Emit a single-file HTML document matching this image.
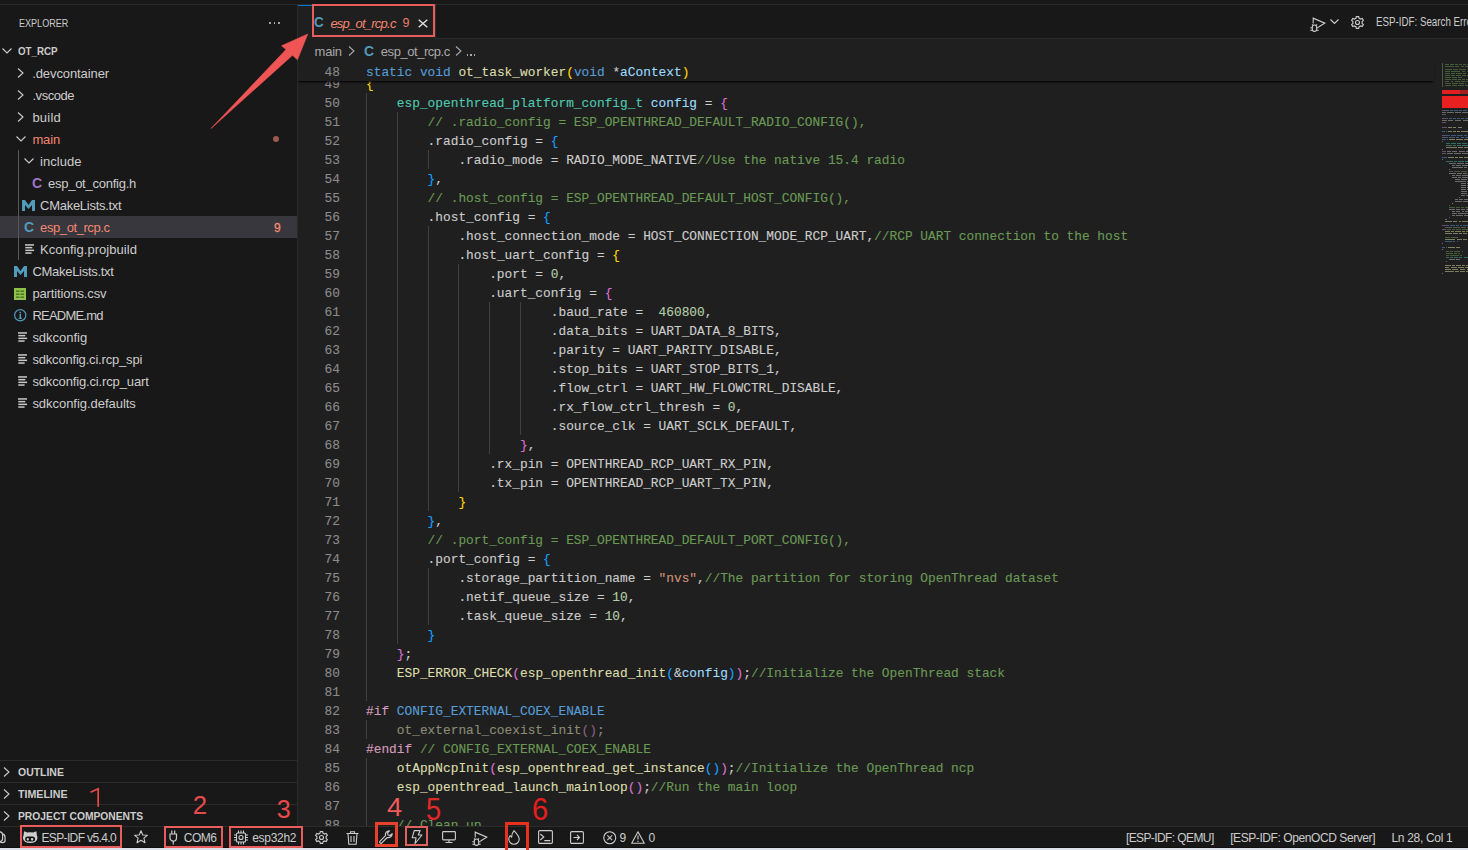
<!DOCTYPE html><html><head><meta charset="utf-8"><style>
*{margin:0;padding:0;box-sizing:border-box}
html,body{width:1468px;height:850px;overflow:hidden;background:#181818}
body{position:relative;font-family:"Liberation Sans",sans-serif;color:#cccccc}
.a{position:absolute}
.t{white-space:pre}
.mono{font-family:"Liberation Mono",monospace;font-size:12.84px;white-space:pre;line-height:19px;-webkit-text-stroke:0.12px currentColor}
svg{overflow:visible}
</style></head><body>
<div class="a" style="left:0px;top:0px;width:1468px;height:4px;background:#181818;"></div>
<div class="a" style="left:0px;top:4px;width:1468px;height:1px;background:#2b2b2b;"></div>
<div class="a" style="left:0px;top:5px;width:297px;height:821px;background:#181818;"></div>
<div class="a" style="left:297px;top:5px;width:1px;height:821px;background:#2b2b2b;"></div>
<div class="a" style="left:298px;top:5px;width:1170px;height:821px;background:#1f1f1f;"></div>
<div class="a" style="left:298px;top:5px;width:1170px;height:34px;background:#181818;"></div>
<div class="a" style="left:298px;top:38px;width:1170px;height:1px;background:#2b2b2b;"></div>
<div class="a" style="left:298px;top:5px;width:138px;height:34px;background:#1f1f1f;border-top:1px solid #0078d4;border-right:1px solid #2b2b2b"></div>
<div class="a" style="left:366px;top:93px;width:1px;height:19px;background:#404040;"></div>
<div class="a" style="left:366px;top:112px;width:1px;height:19px;background:#404040;"></div>
<div class="a" style="left:397px;top:112px;width:1px;height:19px;background:#404040;"></div>
<div class="a" style="left:366px;top:131px;width:1px;height:19px;background:#404040;"></div>
<div class="a" style="left:397px;top:131px;width:1px;height:19px;background:#404040;"></div>
<div class="a" style="left:366px;top:150px;width:1px;height:19px;background:#404040;"></div>
<div class="a" style="left:397px;top:150px;width:1px;height:19px;background:#404040;"></div>
<div class="a" style="left:428px;top:150px;width:1px;height:19px;background:#404040;"></div>
<div class="a" style="left:366px;top:169px;width:1px;height:19px;background:#404040;"></div>
<div class="a" style="left:397px;top:169px;width:1px;height:19px;background:#404040;"></div>
<div class="a" style="left:366px;top:188px;width:1px;height:19px;background:#404040;"></div>
<div class="a" style="left:397px;top:188px;width:1px;height:19px;background:#404040;"></div>
<div class="a" style="left:366px;top:207px;width:1px;height:19px;background:#404040;"></div>
<div class="a" style="left:397px;top:207px;width:1px;height:19px;background:#404040;"></div>
<div class="a" style="left:366px;top:226px;width:1px;height:19px;background:#404040;"></div>
<div class="a" style="left:397px;top:226px;width:1px;height:19px;background:#404040;"></div>
<div class="a" style="left:428px;top:226px;width:1px;height:19px;background:#404040;"></div>
<div class="a" style="left:366px;top:245px;width:1px;height:19px;background:#404040;"></div>
<div class="a" style="left:397px;top:245px;width:1px;height:19px;background:#404040;"></div>
<div class="a" style="left:428px;top:245px;width:1px;height:19px;background:#404040;"></div>
<div class="a" style="left:366px;top:264px;width:1px;height:19px;background:#404040;"></div>
<div class="a" style="left:397px;top:264px;width:1px;height:19px;background:#404040;"></div>
<div class="a" style="left:428px;top:264px;width:1px;height:19px;background:#404040;"></div>
<div class="a" style="left:458px;top:264px;width:1px;height:19px;background:#404040;"></div>
<div class="a" style="left:366px;top:283px;width:1px;height:19px;background:#404040;"></div>
<div class="a" style="left:397px;top:283px;width:1px;height:19px;background:#404040;"></div>
<div class="a" style="left:428px;top:283px;width:1px;height:19px;background:#404040;"></div>
<div class="a" style="left:458px;top:283px;width:1px;height:19px;background:#404040;"></div>
<div class="a" style="left:366px;top:302px;width:1px;height:19px;background:#404040;"></div>
<div class="a" style="left:397px;top:302px;width:1px;height:19px;background:#404040;"></div>
<div class="a" style="left:428px;top:302px;width:1px;height:19px;background:#404040;"></div>
<div class="a" style="left:458px;top:302px;width:1px;height:19px;background:#404040;"></div>
<div class="a" style="left:489px;top:302px;width:1px;height:19px;background:#404040;"></div>
<div class="a" style="left:520px;top:302px;width:1px;height:19px;background:#404040;"></div>
<div class="a" style="left:366px;top:321px;width:1px;height:19px;background:#404040;"></div>
<div class="a" style="left:397px;top:321px;width:1px;height:19px;background:#404040;"></div>
<div class="a" style="left:428px;top:321px;width:1px;height:19px;background:#404040;"></div>
<div class="a" style="left:458px;top:321px;width:1px;height:19px;background:#404040;"></div>
<div class="a" style="left:489px;top:321px;width:1px;height:19px;background:#404040;"></div>
<div class="a" style="left:520px;top:321px;width:1px;height:19px;background:#404040;"></div>
<div class="a" style="left:366px;top:340px;width:1px;height:19px;background:#404040;"></div>
<div class="a" style="left:397px;top:340px;width:1px;height:19px;background:#404040;"></div>
<div class="a" style="left:428px;top:340px;width:1px;height:19px;background:#404040;"></div>
<div class="a" style="left:458px;top:340px;width:1px;height:19px;background:#404040;"></div>
<div class="a" style="left:489px;top:340px;width:1px;height:19px;background:#404040;"></div>
<div class="a" style="left:520px;top:340px;width:1px;height:19px;background:#404040;"></div>
<div class="a" style="left:366px;top:359px;width:1px;height:19px;background:#404040;"></div>
<div class="a" style="left:397px;top:359px;width:1px;height:19px;background:#404040;"></div>
<div class="a" style="left:428px;top:359px;width:1px;height:19px;background:#404040;"></div>
<div class="a" style="left:458px;top:359px;width:1px;height:19px;background:#404040;"></div>
<div class="a" style="left:489px;top:359px;width:1px;height:19px;background:#404040;"></div>
<div class="a" style="left:520px;top:359px;width:1px;height:19px;background:#404040;"></div>
<div class="a" style="left:366px;top:378px;width:1px;height:19px;background:#404040;"></div>
<div class="a" style="left:397px;top:378px;width:1px;height:19px;background:#404040;"></div>
<div class="a" style="left:428px;top:378px;width:1px;height:19px;background:#404040;"></div>
<div class="a" style="left:458px;top:378px;width:1px;height:19px;background:#404040;"></div>
<div class="a" style="left:489px;top:378px;width:1px;height:19px;background:#404040;"></div>
<div class="a" style="left:520px;top:378px;width:1px;height:19px;background:#404040;"></div>
<div class="a" style="left:366px;top:397px;width:1px;height:19px;background:#404040;"></div>
<div class="a" style="left:397px;top:397px;width:1px;height:19px;background:#404040;"></div>
<div class="a" style="left:428px;top:397px;width:1px;height:19px;background:#404040;"></div>
<div class="a" style="left:458px;top:397px;width:1px;height:19px;background:#404040;"></div>
<div class="a" style="left:489px;top:397px;width:1px;height:19px;background:#404040;"></div>
<div class="a" style="left:520px;top:397px;width:1px;height:19px;background:#404040;"></div>
<div class="a" style="left:366px;top:416px;width:1px;height:19px;background:#404040;"></div>
<div class="a" style="left:397px;top:416px;width:1px;height:19px;background:#404040;"></div>
<div class="a" style="left:428px;top:416px;width:1px;height:19px;background:#404040;"></div>
<div class="a" style="left:458px;top:416px;width:1px;height:19px;background:#404040;"></div>
<div class="a" style="left:489px;top:416px;width:1px;height:19px;background:#404040;"></div>
<div class="a" style="left:520px;top:416px;width:1px;height:19px;background:#404040;"></div>
<div class="a" style="left:366px;top:435px;width:1px;height:19px;background:#404040;"></div>
<div class="a" style="left:397px;top:435px;width:1px;height:19px;background:#404040;"></div>
<div class="a" style="left:428px;top:435px;width:1px;height:19px;background:#404040;"></div>
<div class="a" style="left:458px;top:435px;width:1px;height:19px;background:#404040;"></div>
<div class="a" style="left:489px;top:435px;width:1px;height:19px;background:#404040;"></div>
<div class="a" style="left:366px;top:454px;width:1px;height:19px;background:#404040;"></div>
<div class="a" style="left:397px;top:454px;width:1px;height:19px;background:#404040;"></div>
<div class="a" style="left:428px;top:454px;width:1px;height:19px;background:#404040;"></div>
<div class="a" style="left:458px;top:454px;width:1px;height:19px;background:#404040;"></div>
<div class="a" style="left:366px;top:473px;width:1px;height:19px;background:#404040;"></div>
<div class="a" style="left:397px;top:473px;width:1px;height:19px;background:#404040;"></div>
<div class="a" style="left:428px;top:473px;width:1px;height:19px;background:#404040;"></div>
<div class="a" style="left:458px;top:473px;width:1px;height:19px;background:#404040;"></div>
<div class="a" style="left:366px;top:492px;width:1px;height:19px;background:#404040;"></div>
<div class="a" style="left:397px;top:492px;width:1px;height:19px;background:#404040;"></div>
<div class="a" style="left:428px;top:492px;width:1px;height:19px;background:#404040;"></div>
<div class="a" style="left:366px;top:511px;width:1px;height:19px;background:#404040;"></div>
<div class="a" style="left:397px;top:511px;width:1px;height:19px;background:#404040;"></div>
<div class="a" style="left:366px;top:530px;width:1px;height:19px;background:#404040;"></div>
<div class="a" style="left:397px;top:530px;width:1px;height:19px;background:#404040;"></div>
<div class="a" style="left:366px;top:549px;width:1px;height:19px;background:#404040;"></div>
<div class="a" style="left:397px;top:549px;width:1px;height:19px;background:#404040;"></div>
<div class="a" style="left:366px;top:568px;width:1px;height:19px;background:#404040;"></div>
<div class="a" style="left:397px;top:568px;width:1px;height:19px;background:#404040;"></div>
<div class="a" style="left:428px;top:568px;width:1px;height:19px;background:#404040;"></div>
<div class="a" style="left:366px;top:587px;width:1px;height:19px;background:#404040;"></div>
<div class="a" style="left:397px;top:587px;width:1px;height:19px;background:#404040;"></div>
<div class="a" style="left:428px;top:587px;width:1px;height:19px;background:#404040;"></div>
<div class="a" style="left:366px;top:606px;width:1px;height:19px;background:#404040;"></div>
<div class="a" style="left:397px;top:606px;width:1px;height:19px;background:#404040;"></div>
<div class="a" style="left:428px;top:606px;width:1px;height:19px;background:#404040;"></div>
<div class="a" style="left:366px;top:625px;width:1px;height:19px;background:#404040;"></div>
<div class="a" style="left:397px;top:625px;width:1px;height:19px;background:#404040;"></div>
<div class="a" style="left:366px;top:644px;width:1px;height:19px;background:#404040;"></div>
<div class="a" style="left:366px;top:663px;width:1px;height:19px;background:#404040;"></div>
<div class="a" style="left:366px;top:682px;width:1px;height:19px;background:#404040;"></div>
<div class="a" style="left:366px;top:720px;width:1px;height:19px;background:#404040;"></div>
<div class="a" style="left:366px;top:758px;width:1px;height:19px;background:#404040;"></div>
<div class="a" style="left:366px;top:777px;width:1px;height:19px;background:#404040;"></div>
<div class="a" style="left:366px;top:796px;width:1px;height:19px;background:#404040;"></div>
<div class="a" style="left:366px;top:815px;width:1px;height:19px;background:#404040;"></div>
<div class="a mono" style="left:366px;top:74.5px"><span style="color:#ffd700">{</span></div>
<div class="a mono" style="left:300px;width:40px;text-align:right;top:74.5px;color:#8b8b8b">49</div>
<div class="a mono" style="left:366px;top:93.5px">    <span style="color:#4ec9b0">esp_openthread_platform_config_t</span><span style="color:#cccccc"> </span><span style="color:#9cdcfe">config</span><span style="color:#cccccc"> = </span><span style="color:#da70d6">{</span></div>
<div class="a mono" style="left:300px;width:40px;text-align:right;top:93.5px;color:#8b8b8b">50</div>
<div class="a mono" style="left:366px;top:112.5px">        <span style="color:#6a9955">// .radio_config = ESP_OPENTHREAD_DEFAULT_RADIO_CONFIG(),</span></div>
<div class="a mono" style="left:300px;width:40px;text-align:right;top:112.5px;color:#8b8b8b">51</div>
<div class="a mono" style="left:366px;top:131.5px">        <span style="color:#cccccc">.radio_config = </span><span style="color:#179fff">{</span></div>
<div class="a mono" style="left:300px;width:40px;text-align:right;top:131.5px;color:#8b8b8b">52</div>
<div class="a mono" style="left:366px;top:150.5px">            <span style="color:#cccccc">.radio_mode = RADIO_MODE_NATIVE</span><span style="color:#6a9955">//Use the native 15.4 radio</span></div>
<div class="a mono" style="left:300px;width:40px;text-align:right;top:150.5px;color:#8b8b8b">53</div>
<div class="a mono" style="left:366px;top:169.5px">        <span style="color:#179fff">}</span><span style="color:#cccccc">,</span></div>
<div class="a mono" style="left:300px;width:40px;text-align:right;top:169.5px;color:#8b8b8b">54</div>
<div class="a mono" style="left:366px;top:188.5px">        <span style="color:#6a9955">// .host_config = ESP_OPENTHREAD_DEFAULT_HOST_CONFIG(),</span></div>
<div class="a mono" style="left:300px;width:40px;text-align:right;top:188.5px;color:#8b8b8b">55</div>
<div class="a mono" style="left:366px;top:207.5px">        <span style="color:#cccccc">.host_config = </span><span style="color:#179fff">{</span></div>
<div class="a mono" style="left:300px;width:40px;text-align:right;top:207.5px;color:#8b8b8b">56</div>
<div class="a mono" style="left:366px;top:226.5px">            <span style="color:#cccccc">.host_connection_mode = HOST_CONNECTION_MODE_RCP_UART,</span><span style="color:#6a9955">//RCP UART connection to the host</span></div>
<div class="a mono" style="left:300px;width:40px;text-align:right;top:226.5px;color:#8b8b8b">57</div>
<div class="a mono" style="left:366px;top:245.5px">            <span style="color:#cccccc">.host_uart_config = </span><span style="color:#ffd700">{</span></div>
<div class="a mono" style="left:300px;width:40px;text-align:right;top:245.5px;color:#8b8b8b">58</div>
<div class="a mono" style="left:366px;top:264.5px">                <span style="color:#cccccc">.port = </span><span style="color:#b5cea8">0</span><span style="color:#cccccc">,</span></div>
<div class="a mono" style="left:300px;width:40px;text-align:right;top:264.5px;color:#8b8b8b">59</div>
<div class="a mono" style="left:366px;top:283.5px">                <span style="color:#cccccc">.uart_config = </span><span style="color:#da70d6">{</span></div>
<div class="a mono" style="left:300px;width:40px;text-align:right;top:283.5px;color:#8b8b8b">60</div>
<div class="a mono" style="left:366px;top:302.5px">                        <span style="color:#cccccc">.baud_rate =  </span><span style="color:#b5cea8">460800</span><span style="color:#cccccc">,</span></div>
<div class="a mono" style="left:300px;width:40px;text-align:right;top:302.5px;color:#8b8b8b">61</div>
<div class="a mono" style="left:366px;top:321.5px">                        <span style="color:#cccccc">.data_bits = UART_DATA_8_BITS,</span></div>
<div class="a mono" style="left:300px;width:40px;text-align:right;top:321.5px;color:#8b8b8b">62</div>
<div class="a mono" style="left:366px;top:340.5px">                        <span style="color:#cccccc">.parity = UART_PARITY_DISABLE,</span></div>
<div class="a mono" style="left:300px;width:40px;text-align:right;top:340.5px;color:#8b8b8b">63</div>
<div class="a mono" style="left:366px;top:359.5px">                        <span style="color:#cccccc">.stop_bits = UART_STOP_BITS_1,</span></div>
<div class="a mono" style="left:300px;width:40px;text-align:right;top:359.5px;color:#8b8b8b">64</div>
<div class="a mono" style="left:366px;top:378.5px">                        <span style="color:#cccccc">.flow_ctrl = UART_HW_FLOWCTRL_DISABLE,</span></div>
<div class="a mono" style="left:300px;width:40px;text-align:right;top:378.5px;color:#8b8b8b">65</div>
<div class="a mono" style="left:366px;top:397.5px">                        <span style="color:#cccccc">.rx_flow_ctrl_thresh = </span><span style="color:#b5cea8">0</span><span style="color:#cccccc">,</span></div>
<div class="a mono" style="left:300px;width:40px;text-align:right;top:397.5px;color:#8b8b8b">66</div>
<div class="a mono" style="left:366px;top:416.5px">                        <span style="color:#cccccc">.source_clk = UART_SCLK_DEFAULT,</span></div>
<div class="a mono" style="left:300px;width:40px;text-align:right;top:416.5px;color:#8b8b8b">67</div>
<div class="a mono" style="left:366px;top:435.5px">                    <span style="color:#da70d6">}</span><span style="color:#cccccc">,</span></div>
<div class="a mono" style="left:300px;width:40px;text-align:right;top:435.5px;color:#8b8b8b">68</div>
<div class="a mono" style="left:366px;top:454.5px">                <span style="color:#cccccc">.rx_pin = OPENTHREAD_RCP_UART_RX_PIN,</span></div>
<div class="a mono" style="left:300px;width:40px;text-align:right;top:454.5px;color:#8b8b8b">69</div>
<div class="a mono" style="left:366px;top:473.5px">                <span style="color:#cccccc">.tx_pin = OPENTHREAD_RCP_UART_TX_PIN,</span></div>
<div class="a mono" style="left:300px;width:40px;text-align:right;top:473.5px;color:#8b8b8b">70</div>
<div class="a mono" style="left:366px;top:492.5px">            <span style="color:#ffd700">}</span></div>
<div class="a mono" style="left:300px;width:40px;text-align:right;top:492.5px;color:#8b8b8b">71</div>
<div class="a mono" style="left:366px;top:511.5px">        <span style="color:#179fff">}</span><span style="color:#cccccc">,</span></div>
<div class="a mono" style="left:300px;width:40px;text-align:right;top:511.5px;color:#8b8b8b">72</div>
<div class="a mono" style="left:366px;top:530.5px">        <span style="color:#6a9955">// .port_config = ESP_OPENTHREAD_DEFAULT_PORT_CONFIG(),</span></div>
<div class="a mono" style="left:300px;width:40px;text-align:right;top:530.5px;color:#8b8b8b">73</div>
<div class="a mono" style="left:366px;top:549.5px">        <span style="color:#cccccc">.port_config = </span><span style="color:#179fff">{</span></div>
<div class="a mono" style="left:300px;width:40px;text-align:right;top:549.5px;color:#8b8b8b">74</div>
<div class="a mono" style="left:366px;top:568.5px">            <span style="color:#cccccc">.storage_partition_name = </span><span style="color:#ce9178">&quot;nvs&quot;</span><span style="color:#cccccc">,</span><span style="color:#6a9955">//The partition for storing OpenThread dataset</span></div>
<div class="a mono" style="left:300px;width:40px;text-align:right;top:568.5px;color:#8b8b8b">75</div>
<div class="a mono" style="left:366px;top:587.5px">            <span style="color:#cccccc">.netif_queue_size = </span><span style="color:#b5cea8">10</span><span style="color:#cccccc">,</span></div>
<div class="a mono" style="left:300px;width:40px;text-align:right;top:587.5px;color:#8b8b8b">76</div>
<div class="a mono" style="left:366px;top:606.5px">            <span style="color:#cccccc">.task_queue_size = </span><span style="color:#b5cea8">10</span><span style="color:#cccccc">,</span></div>
<div class="a mono" style="left:300px;width:40px;text-align:right;top:606.5px;color:#8b8b8b">77</div>
<div class="a mono" style="left:366px;top:625.5px">        <span style="color:#179fff">}</span></div>
<div class="a mono" style="left:300px;width:40px;text-align:right;top:625.5px;color:#8b8b8b">78</div>
<div class="a mono" style="left:366px;top:644.5px">    <span style="color:#da70d6">}</span><span style="color:#cccccc">;</span></div>
<div class="a mono" style="left:300px;width:40px;text-align:right;top:644.5px;color:#8b8b8b">79</div>
<div class="a mono" style="left:366px;top:663.5px">    <span style="color:#dcdcaa">ESP_ERROR_CHECK</span><span style="color:#da70d6">(</span><span style="color:#dcdcaa">esp_openthread_init</span><span style="color:#179fff">(</span><span style="color:#cccccc">&amp;</span><span style="color:#9cdcfe">config</span><span style="color:#179fff">)</span><span style="color:#da70d6">)</span><span style="color:#cccccc">;</span><span style="color:#6a9955">//Initialize the OpenThread stack</span></div>
<div class="a mono" style="left:300px;width:40px;text-align:right;top:663.5px;color:#8b8b8b">80</div>
<div class="a mono" style="left:366px;top:682.5px">    </div>
<div class="a mono" style="left:300px;width:40px;text-align:right;top:682.5px;color:#8b8b8b">81</div>
<div class="a mono" style="left:366px;top:701.5px"><span style="color:#d49cbc">#if</span><span style="color:#cccccc"> </span><span style="color:#569cd6">CONFIG_EXTERNAL_COEX_ENABLE</span></div>
<div class="a mono" style="left:300px;width:40px;text-align:right;top:701.5px;color:#8b8b8b">82</div>
<div class="a mono" style="left:366px;top:720.5px">    <span style="color:#8c8b74">ot_external_coexist_init</span><span style="color:#8a5f88">()</span><span style="color:#8a8a8a">;</span></div>
<div class="a mono" style="left:300px;width:40px;text-align:right;top:720.5px;color:#8b8b8b">83</div>
<div class="a mono" style="left:366px;top:739.5px"><span style="color:#d49cbc">#endif</span><span style="color:#cccccc"> </span><span style="color:#6a9955">// CONFIG_EXTERNAL_COEX_ENABLE</span></div>
<div class="a mono" style="left:300px;width:40px;text-align:right;top:739.5px;color:#8b8b8b">84</div>
<div class="a mono" style="left:366px;top:758.5px">    <span style="color:#dcdcaa">otAppNcpInit</span><span style="color:#da70d6">(</span><span style="color:#dcdcaa">esp_openthread_get_instance</span><span style="color:#179fff">()</span><span style="color:#da70d6">)</span><span style="color:#cccccc">;</span><span style="color:#6a9955">//Initialize the OpenThread ncp</span></div>
<div class="a mono" style="left:300px;width:40px;text-align:right;top:758.5px;color:#8b8b8b">85</div>
<div class="a mono" style="left:366px;top:777.5px">    <span style="color:#dcdcaa">esp_openthread_launch_mainloop</span><span style="color:#da70d6">()</span><span style="color:#cccccc">;</span><span style="color:#6a9955">//Run the main loop</span></div>
<div class="a mono" style="left:300px;width:40px;text-align:right;top:777.5px;color:#8b8b8b">86</div>
<div class="a mono" style="left:366px;top:796.5px">    </div>
<div class="a mono" style="left:300px;width:40px;text-align:right;top:796.5px;color:#8b8b8b">87</div>
<div class="a mono" style="left:366px;top:815.5px">    <span style="color:#6a9955">// Clean up</span></div>
<div class="a mono" style="left:300px;width:40px;text-align:right;top:815.5px;color:#8b8b8b">88</div>
<div class="a" style="left:298px;top:39px;width:1142px;height:22px;background:#1f1f1f;"></div>
<div class="a" style="left:298px;top:61px;width:1136px;height:20px;background:#1f1f1f;box-shadow:0 2px 2px -1px #000"></div>
<div class="a mono" style="left:366px;top:62.5px"><span style="color:#569cd6">static</span><span style="color:#cccccc"> </span><span style="color:#569cd6">void</span><span style="color:#cccccc"> </span><span style="color:#dcdcaa">ot_task_worker</span><span style="color:#ffd700">(</span><span style="color:#569cd6">void</span><span style="color:#cccccc"> *</span><span style="color:#9cdcfe">aContext</span><span style="color:#ffd700">)</span></div>
<div class="a mono" style="left:300px;width:40px;text-align:right;top:62.5px;color:#8b8b8b">48</div>
<div class="a t" style="left:18.60px;top:17.69px;font-size:11px;line-height:11px;color:#cccccc;transform:scaleX(0.8225);transform-origin:0 0;">EXPLORER</div>
<div class="a" style="left:269px;top:21.8px;width:1.8px;height:1.8px;background:#cccccc;border-radius:0.9px"></div>
<div class="a" style="left:273.5px;top:21.8px;width:1.8px;height:1.8px;background:#cccccc;border-radius:0.9px"></div>
<div class="a" style="left:278px;top:21.8px;width:1.8px;height:1.8px;background:#cccccc;border-radius:0.9px"></div>
<svg class="a" style="left:2px;top:47.7px;" width="10" height="6" viewBox="0 0 10 6"><path d="M0.5 0.5 L5 5 L9.5 0.5" fill="none" stroke="#cccccc" stroke-width="1.1"/></svg>
<div class="a t" style="left:18.00px;top:45.69px;font-size:11px;line-height:11px;color:#cccccc;transform:scaleX(0.8874);transform-origin:0 0;font-weight:bold;">OT_RCP</div>
<div class="a" style="left:0px;top:216px;width:297px;height:22px;background:#37373d;"></div>
<div class="a" style="left:18px;top:150px;width:1px;height:110px;background:#585858;"></div>
<svg class="a" style="left:17px;top:68px;" width="7" height="10" viewBox="0 0 7 10"><path d="M1 0.5 L6 5 L1 9.5" fill="none" stroke="#cccccc" stroke-width="1.1"/></svg>
<div class="a t" style="left:32.20px;top:67.00px;font-size:13px;line-height:13px;color:#cccccc;letter-spacing:-0.090px;">.devcontainer</div>
<svg class="a" style="left:17px;top:90px;" width="7" height="10" viewBox="0 0 7 10"><path d="M1 0.5 L6 5 L1 9.5" fill="none" stroke="#cccccc" stroke-width="1.1"/></svg>
<div class="a t" style="left:32.40px;top:89.00px;font-size:13px;line-height:13px;color:#cccccc;letter-spacing:-0.435px;">.vscode</div>
<svg class="a" style="left:17px;top:112px;" width="7" height="10" viewBox="0 0 7 10"><path d="M1 0.5 L6 5 L1 9.5" fill="none" stroke="#cccccc" stroke-width="1.1"/></svg>
<div class="a t" style="left:32.40px;top:111.00px;font-size:13px;line-height:13px;color:#cccccc;letter-spacing:0.229px;">build</div>
<svg class="a" style="left:15.5px;top:135.7px;" width="10" height="6" viewBox="0 0 10 6"><path d="M0.5 0.5 L5 5 L9.5 0.5" fill="none" stroke="#cccccc" stroke-width="1.1"/></svg>
<div class="a t" style="left:32.40px;top:133.00px;font-size:13px;line-height:13px;color:#f48771;letter-spacing:-0.096px;">main</div>
<svg class="a" style="left:23.5px;top:157.7px;" width="10" height="6" viewBox="0 0 10 6"><path d="M0.5 0.5 L5 5 L9.5 0.5" fill="none" stroke="#cccccc" stroke-width="1.1"/></svg>
<div class="a t" style="left:40.10px;top:155.00px;font-size:13px;line-height:13px;color:#cccccc;letter-spacing:0.030px;">include</div>
<div class="a t" style="left:31.80px;top:176.06px;font-size:13.99px;line-height:13.99px;color:#a074c4;font-weight:bold;transform:scaleX(1.005);transform-origin:0 0;">C</div>
<div class="a t" style="left:47.90px;top:177.00px;font-size:13px;line-height:13px;color:#cccccc;letter-spacing:-0.238px;">esp_ot_config.h</div>
<svg class="a" style="left:21.6px;top:199.5px;" width="13" height="11" viewBox="0 0 13 11"><path d="M0 11 V0 H3 L6.5 5 L10 0 H13 V11 H10 V5 L6.5 9 L3 5 V11 Z" fill="#519aba"/></svg>
<div class="a t" style="left:40.10px;top:199.00px;font-size:13px;line-height:13px;color:#cccccc;letter-spacing:-0.281px;">CMakeLists.txt</div>
<div class="a t" style="left:23.90px;top:220.06px;font-size:13.99px;line-height:13.99px;color:#519aba;font-weight:bold;transform:scaleX(1.005);transform-origin:0 0;">C</div>
<div class="a t" style="left:40.10px;top:221.00px;font-size:13px;line-height:13px;color:#f48771;letter-spacing:-0.414px;">esp_ot_rcp.c</div>
<svg class="a" style="left:25.3px;top:244px;" width="10" height="10" viewBox="0 0 10 10"><g fill="#c8c8c8"><rect x="0" y="0.2" width="9" height="1.5"/><rect x="0.3" y="2.9" width="7" height="1.5"/><rect x="0.3" y="5.6" width="8.8" height="1.5"/><rect x="0.3" y="8.3" width="6.3" height="1.5"/></g></svg>
<div class="a t" style="left:40.10px;top:243.00px;font-size:13px;line-height:13px;color:#cccccc;letter-spacing:0.046px;">Kconfig.projbuild</div>
<svg class="a" style="left:14px;top:265.5px;" width="13" height="11" viewBox="0 0 13 11"><path d="M0 11 V0 H3 L6.5 5 L10 0 H13 V11 H10 V5 L6.5 9 L3 5 V11 Z" fill="#519aba"/></svg>
<div class="a t" style="left:32.40px;top:265.00px;font-size:13px;line-height:13px;color:#cccccc;letter-spacing:-0.288px;">CMakeLists.txt</div>
<svg class="a" style="left:14px;top:287.5px;" width="12" height="12" viewBox="0 0 12 12"><rect width="12" height="12" fill="#8dc149"/><g fill="#4d7a22"><rect x="2" y="2.5" width="3.5" height="1.5"/><rect x="6.5" y="2.5" width="3.5" height="1.5"/><rect x="2" y="5.5" width="3.5" height="1.5"/><rect x="6.5" y="5.5" width="3.5" height="1.5"/><rect x="2" y="8.5" width="3.5" height="1.5"/><rect x="6.5" y="8.5" width="3.5" height="1.5"/></g></svg>
<div class="a t" style="left:32.40px;top:287.00px;font-size:13px;line-height:13px;color:#cccccc;letter-spacing:-0.129px;">partitions.csv</div>
<svg class="a" style="left:14px;top:309px;" width="12.5" height="12.5" viewBox="0 0 12.5 12.5"><circle cx="6.25" cy="6.25" r="5.6" fill="none" stroke="#519aba" stroke-width="1.2"/><rect x="5.5" y="5" width="1.6" height="4.5" fill="#519aba"/><rect x="5.5" y="2.8" width="1.6" height="1.5" fill="#519aba"/><rect x="4.5" y="8.8" width="3.6" height="1" fill="#519aba"/></svg>
<div class="a t" style="left:32.40px;top:309.00px;font-size:13px;line-height:13px;color:#cccccc;letter-spacing:-0.775px;">README.md</div>
<svg class="a" style="left:17.5px;top:332px;" width="10" height="10" viewBox="0 0 10 10"><g fill="#c8c8c8"><rect x="0" y="0.2" width="9" height="1.5"/><rect x="0.3" y="2.9" width="7" height="1.5"/><rect x="0.3" y="5.6" width="8.8" height="1.5"/><rect x="0.3" y="8.3" width="6.3" height="1.5"/></g></svg>
<div class="a t" style="left:32.40px;top:331.00px;font-size:13px;line-height:13px;color:#cccccc;letter-spacing:-0.017px;">sdkconfig</div>
<svg class="a" style="left:17.5px;top:354px;" width="10" height="10" viewBox="0 0 10 10"><g fill="#c8c8c8"><rect x="0" y="0.2" width="9" height="1.5"/><rect x="0.3" y="2.9" width="7" height="1.5"/><rect x="0.3" y="5.6" width="8.8" height="1.5"/><rect x="0.3" y="8.3" width="6.3" height="1.5"/></g></svg>
<div class="a t" style="left:32.40px;top:353.00px;font-size:13px;line-height:13px;color:#cccccc;letter-spacing:-0.183px;">sdkconfig.ci.rcp_spi</div>
<svg class="a" style="left:17.5px;top:376px;" width="10" height="10" viewBox="0 0 10 10"><g fill="#c8c8c8"><rect x="0" y="0.2" width="9" height="1.5"/><rect x="0.3" y="2.9" width="7" height="1.5"/><rect x="0.3" y="5.6" width="8.8" height="1.5"/><rect x="0.3" y="8.3" width="6.3" height="1.5"/></g></svg>
<div class="a t" style="left:32.40px;top:375.00px;font-size:13px;line-height:13px;color:#cccccc;letter-spacing:-0.142px;">sdkconfig.ci.rcp_uart</div>
<svg class="a" style="left:17.5px;top:398px;" width="10" height="10" viewBox="0 0 10 10"><g fill="#c8c8c8"><rect x="0" y="0.2" width="9" height="1.5"/><rect x="0.3" y="2.9" width="7" height="1.5"/><rect x="0.3" y="5.6" width="8.8" height="1.5"/><rect x="0.3" y="8.3" width="6.3" height="1.5"/></g></svg>
<div class="a t" style="left:32.40px;top:397.00px;font-size:13px;line-height:13px;color:#cccccc;letter-spacing:-0.035px;">sdkconfig.defaults</div>
<div class="a" style="left:273px;top:136px;width:6px;height:6px;background:#9a5a4c;border-radius:3px"></div>
<div class="a t" style="left:274.00px;top:221.84px;font-size:12px;line-height:12px;color:#f48771;-webkit-text-stroke:0.3px currentColor;">9</div>
<div class="a" style="left:0px;top:760px;width:297px;height:1px;background:#2b2b2b;"></div>
<div class="a" style="left:0px;top:782px;width:297px;height:1px;background:#2b2b2b;"></div>
<div class="a" style="left:0px;top:804px;width:297px;height:1px;background:#2b2b2b;"></div>
<svg class="a" style="left:3.4000000000000004px;top:767px;" width="7" height="10" viewBox="0 0 7 10"><path d="M1 0.5 L6 5 L1 9.5" fill="none" stroke="#cccccc" stroke-width="1.1"/></svg>
<div class="a t" style="left:18.00px;top:766.69px;font-size:11px;line-height:11px;color:#cccccc;transform:scaleX(0.9507);transform-origin:0 0;font-weight:bold;">OUTLINE</div>
<svg class="a" style="left:3.4000000000000004px;top:789px;" width="7" height="10" viewBox="0 0 7 10"><path d="M1 0.5 L6 5 L1 9.5" fill="none" stroke="#cccccc" stroke-width="1.1"/></svg>
<div class="a t" style="left:18.00px;top:788.69px;font-size:11px;line-height:11px;color:#cccccc;transform:scaleX(0.9660);transform-origin:0 0;font-weight:bold;">TIMELINE</div>
<svg class="a" style="left:3.4000000000000004px;top:811px;" width="7" height="10" viewBox="0 0 7 10"><path d="M1 0.5 L6 5 L1 9.5" fill="none" stroke="#cccccc" stroke-width="1.1"/></svg>
<div class="a t" style="left:18.00px;top:810.69px;font-size:11px;line-height:11px;color:#cccccc;transform:scaleX(0.9352);transform-origin:0 0;font-weight:bold;">PROJECT COMPONENTS</div>
<div class="a t" style="left:314.33px;top:14.79px;font-size:14.54px;line-height:14.54px;color:#519aba;font-weight:bold;transform:scaleX(0.924);transform-origin:0 0;">C</div>
<div class="a t" style="left:330.40px;top:16.80px;font-size:13px;line-height:13px;color:#f48771;letter-spacing:-0.768px;font-style:italic;">esp_ot_rcp.c</div>
<div class="a t" style="left:402.60px;top:16.72px;font-size:12.5px;line-height:12.5px;color:#e8806c;">9</div>
<svg class="a" style="left:418px;top:19px;" width="10" height="9" viewBox="0 0 10 9"><path d="M0.7 0.7 L9.3 8.3 M9.3 0.7 L0.7 8.3" stroke="#e0e0e0" stroke-width="1.4"/></svg>
<div class="a t" style="left:314.60px;top:44.80px;font-size:13px;line-height:13px;color:#a9a9a9;letter-spacing:-0.263px;">main</div>
<svg class="a" style="left:347.5px;top:46.2px;" width="7" height="10" viewBox="0 0 7 10"><path d="M1 0.5 L6 5 L1 9.5" fill="none" stroke="#a9a9a9" stroke-width="1.1"/></svg>
<div class="a t" style="left:364.10px;top:44.02px;font-size:14.27px;line-height:14.27px;color:#519aba;font-weight:bold;transform:scaleX(0.975);transform-origin:0 0;">C</div>
<div class="a t" style="left:380.80px;top:44.80px;font-size:13px;line-height:13px;color:#a9a9a9;letter-spacing:-0.450px;">esp_ot_rcp.c</div>
<svg class="a" style="left:455px;top:46.2px;" width="7" height="10" viewBox="0 0 7 10"><path d="M1 0.5 L6 5 L1 9.5" fill="none" stroke="#a9a9a9" stroke-width="1.1"/></svg>
<div class="a" style="left:466.5px;top:54px;width:1.6px;height:1.6px;background:#a9a9a9;"></div>
<div class="a" style="left:470px;top:54px;width:1.6px;height:1.6px;background:#a9a9a9;"></div>
<div class="a" style="left:473.5px;top:54px;width:1.6px;height:1.6px;background:#a9a9a9;"></div>
<svg class="a" style="left:1309.7px;top:16.8px;" width="16" height="15" viewBox="0 0 16 15"><g fill="none" stroke="#cccccc" stroke-width="1.1"><path d="M3.2 6.5 V1.2 L14.8 6.2 L8.5 10"/><path d="M2.3 10.2 A2.2 2.2 0 0 1 6.7 10.2 V12.2 A2.2 2.2 0 0 1 2.3 12.2 Z"/><path d="M0.3 10.8 H2.3 M6.7 10.8 H8.7 M0.3 13.2 H2.3 M6.7 13.2 H8.7 M3 8.3 L2 7.3 M6 8.3 L7 7.3"/></g></svg>
<svg class="a" style="left:1330px;top:19px;" width="9" height="6" viewBox="0 0 9 6"><path d="M0.5 0.5 L4.5 4.5 L8.5 0.5" fill="none" stroke="#cccccc" stroke-width="1.1"/></svg>
<svg class="a" style="left:1351px;top:16px;" width="13" height="13" viewBox="0 0 13 13"><g fill="none" stroke="#cccccc" stroke-width="1.1"><circle cx="6.5" cy="6.5" r="2"/><path d="M5.3 0.6 H7.7 L8.1 2.3 L9.6 3.1 L11.2 2.4 L12.4 4.5 L11.1 5.6 V7.4 L12.4 8.5 L11.2 10.6 L9.6 9.9 L8.1 10.7 L7.7 12.4 H5.3 L4.9 10.7 L3.4 9.9 L1.8 10.6 L0.6 8.5 L1.9 7.4 V5.6 L0.6 4.5 L1.8 2.4 L3.4 3.1 L4.9 2.3 Z"/></g></svg>
<div class="a t" style="left:1375.70px;top:16.14px;font-size:12px;line-height:12px;color:#cccccc;transform:scaleX(0.8130);transform-origin:0 0;">ESP-IDF: Search Error Hint</div>
<div class="a" style="left:0;top:0;opacity:0.62">
<div class="a" style="left:1445px;top:64px;width:4.0px;height:1.1px;background:#5b7f4a;"></div>
<div class="a" style="left:1449.8px;top:64px;width:4.3px;height:1.1px;background:#5b7f4a;"></div>
<div class="a" style="left:1454.8px;top:64px;width:2.8px;height:1.1px;background:#5b7f4a;"></div>
<div class="a" style="left:1458.9px;top:64px;width:2.9px;height:1.1px;background:#5b7f4a;"></div>
<div class="a" style="left:1463.0px;top:64px;width:2.8px;height:1.1px;background:#5b7f4a;"></div>
<div class="a" style="left:1466.9px;top:64px;width:1.1px;height:1.1px;background:#5b7f4a;"></div>
<div class="a" style="left:1445px;top:66px;width:4.5px;height:1.1px;background:#5b7f4a;"></div>
<div class="a" style="left:1450.3px;top:66px;width:3.6px;height:1.1px;background:#5b7f4a;"></div>
<div class="a" style="left:1455.0px;top:66px;width:4.4px;height:1.1px;background:#5b7f4a;"></div>
<div class="a" style="left:1460.6px;top:66px;width:3.1px;height:1.1px;background:#5b7f4a;"></div>
<div class="a" style="left:1464.5px;top:66px;width:3.5px;height:1.1px;background:#5b7f4a;"></div>
<div class="a" style="left:1445px;top:68.5px;width:6.8px;height:1.1px;background:#5b7f4a;"></div>
<div class="a" style="left:1453.0px;top:68.5px;width:5.1px;height:1.1px;background:#5b7f4a;"></div>
<div class="a" style="left:1458.9px;top:68.5px;width:6.9px;height:1.1px;background:#5b7f4a;"></div>
<div class="a" style="left:1445px;top:70.5px;width:5.0px;height:1.1px;background:#5b7f4a;"></div>
<div class="a" style="left:1450.8px;top:70.5px;width:3.8px;height:1.1px;background:#5b7f4a;"></div>
<div class="a" style="left:1455.4px;top:70.5px;width:4.9px;height:1.1px;background:#5b7f4a;"></div>
<div class="a" style="left:1461.5px;top:70.5px;width:3.9px;height:1.1px;background:#5b7f4a;"></div>
<div class="a" style="left:1466.6px;top:70.5px;width:1.4px;height:1.1px;background:#5b7f4a;"></div>
<div class="a" style="left:1445px;top:72.5px;width:5.1px;height:1.1px;background:#5b7f4a;"></div>
<div class="a" style="left:1450.9px;top:72.5px;width:4.2px;height:1.1px;background:#5b7f4a;"></div>
<div class="a" style="left:1456.2px;top:72.5px;width:5.7px;height:1.1px;background:#5b7f4a;"></div>
<div class="a" style="left:1463.2px;top:72.5px;width:2.8px;height:1.1px;background:#5b7f4a;"></div>
<div class="a" style="left:1445px;top:74.5px;width:4.7px;height:1.1px;background:#5b7f4a;"></div>
<div class="a" style="left:1450.9px;top:74.5px;width:4.4px;height:1.1px;background:#5b7f4a;"></div>
<div class="a" style="left:1456.4px;top:74.5px;width:4.6px;height:1.1px;background:#5b7f4a;"></div>
<div class="a" style="left:1462.0px;top:74.5px;width:4.1px;height:1.1px;background:#5b7f4a;"></div>
<div class="a" style="left:1466.9px;top:74.5px;width:1.1px;height:1.1px;background:#5b7f4a;"></div>
<div class="a" style="left:1445px;top:76.5px;width:6.0px;height:1.1px;background:#5b7f4a;"></div>
<div class="a" style="left:1451.8px;top:76.5px;width:5.1px;height:1.1px;background:#5b7f4a;"></div>
<div class="a" style="left:1458.1px;top:76.5px;width:3.9px;height:1.1px;background:#5b7f4a;"></div>
<div class="a" style="left:1445px;top:78.5px;width:5.8px;height:1.1px;background:#5b7f4a;"></div>
<div class="a" style="left:1451.8px;top:78.5px;width:5.2px;height:1.1px;background:#5b7f4a;"></div>
<div class="a" style="left:1457.8px;top:78.5px;width:3.0px;height:1.1px;background:#5b7f4a;"></div>
<div class="a" style="left:1461.9px;top:78.5px;width:3.2px;height:1.1px;background:#5b7f4a;"></div>
<div class="a" style="left:1466.1px;top:78.5px;width:1.9px;height:1.1px;background:#5b7f4a;"></div>
<div class="a" style="left:1445px;top:80.5px;width:4.4px;height:1.1px;background:#5b7f4a;"></div>
<div class="a" style="left:1450.6px;top:80.5px;width:2.8px;height:1.1px;background:#5b7f4a;"></div>
<div class="a" style="left:1454.6px;top:80.5px;width:5.1px;height:1.1px;background:#5b7f4a;"></div>
<div class="a" style="left:1460.7px;top:80.5px;width:4.0px;height:1.1px;background:#5b7f4a;"></div>
<div class="a" style="left:1465.8px;top:80.5px;width:2.2px;height:1.1px;background:#5b7f4a;"></div>
<div class="a" style="left:1445px;top:82.5px;width:6.1px;height:1.1px;background:#5b7f4a;"></div>
<div class="a" style="left:1451.9px;top:82.5px;width:6.3px;height:1.1px;background:#5b7f4a;"></div>
<div class="a" style="left:1459.2px;top:82.5px;width:4.6px;height:1.1px;background:#5b7f4a;"></div>
<div class="a" style="left:1465.0px;top:82.5px;width:1.0px;height:1.1px;background:#5b7f4a;"></div>
<div class="a" style="left:1445px;top:84.5px;width:5.7px;height:1.1px;background:#5b7f4a;"></div>
<div class="a" style="left:1451.9px;top:84.5px;width:5.1px;height:1.1px;background:#5b7f4a;"></div>
<div class="a" style="left:1458.2px;top:84.5px;width:6.2px;height:1.1px;background:#5b7f4a;"></div>
<div class="a" style="left:1465.4px;top:84.5px;width:2.6px;height:1.1px;background:#5b7f4a;"></div>
<div class="a" style="left:1442px;top:110px;width:2.5px;height:1.1px;background:#9a6a98;"></div>
<div class="a" style="left:1445px;top:110px;width:4.1px;height:1.1px;background:#4a7fb0;"></div>
<div class="a" style="left:1450.3px;top:110px;width:3.0px;height:1.1px;background:#4a7fb0;"></div>
<div class="a" style="left:1454.1px;top:110px;width:3.5px;height:1.1px;background:#4a7fb0;"></div>
<div class="a" style="left:1458.6px;top:110px;width:3.1px;height:1.1px;background:#4a7fb0;"></div>
<div class="a" style="left:1462.5px;top:110px;width:4.3px;height:1.1px;background:#4a7fb0;"></div>
<div class="a" style="left:1467.8px;top:110px;width:0.2px;height:1.1px;background:#4a7fb0;"></div>
<div class="a" style="left:1442px;top:112px;width:4.3px;height:1.1px;background:#9a9a9a;"></div>
<div class="a" style="left:1447.3px;top:112px;width:6.5px;height:1.1px;background:#9a9a9a;"></div>
<div class="a" style="left:1454.8px;top:112px;width:6.4px;height:1.1px;background:#9a9a9a;"></div>
<div class="a" style="left:1462.2px;top:112px;width:5.7px;height:1.1px;background:#9a9a9a;"></div>
<div class="a" style="left:1442px;top:114px;width:4px;height:1.1px;background:#9a6a98;"></div>
<div class="a" style="left:1442px;top:118px;width:2.5px;height:1.1px;background:#9a6a98;"></div>
<div class="a" style="left:1445px;top:118px;width:2.9px;height:1.1px;background:#4a7fb0;"></div>
<div class="a" style="left:1448.7px;top:118px;width:3.5px;height:1.1px;background:#4a7fb0;"></div>
<div class="a" style="left:1453.0px;top:118px;width:2.6px;height:1.1px;background:#4a7fb0;"></div>
<div class="a" style="left:1456.8px;top:118px;width:3.3px;height:1.1px;background:#4a7fb0;"></div>
<div class="a" style="left:1461.1px;top:118px;width:2.5px;height:1.1px;background:#4a7fb0;"></div>
<div class="a" style="left:1464.6px;top:118px;width:3.4px;height:1.1px;background:#4a7fb0;"></div>
<div class="a" style="left:1442px;top:120px;width:5.0px;height:1.1px;background:#9a9a9a;"></div>
<div class="a" style="left:1447.8px;top:120px;width:5.6px;height:1.1px;background:#9a9a9a;"></div>
<div class="a" style="left:1454.7px;top:120px;width:6.8px;height:1.1px;background:#9a9a9a;"></div>
<div class="a" style="left:1462.6px;top:120px;width:5.4px;height:1.1px;background:#9a9a9a;"></div>
<div class="a" style="left:1442px;top:122px;width:4px;height:1.1px;background:#9a6a98;"></div>
<div class="a" style="left:1442px;top:126.5px;width:5px;height:1.1px;background:#9a6a98;"></div>
<div class="a" style="left:1448px;top:126.5px;width:4.3px;height:1.1px;background:#b8b88e;"></div>
<div class="a" style="left:1453.3px;top:126.5px;width:3.0px;height:1.1px;background:#b8b88e;"></div>
<div class="a" style="left:1457.5px;top:126.5px;width:4.3px;height:1.1px;background:#b8b88e;"></div>
<div class="a" style="left:1442px;top:131px;width:2.8px;height:1.1px;background:#4a7fb0;"></div>
<div class="a" style="left:1445.6px;top:131px;width:1.4px;height:1.1px;background:#4a7fb0;"></div>
<div class="a" style="left:1448px;top:131px;width:4.0px;height:1.1px;background:#b8b88e;"></div>
<div class="a" style="left:1452.8px;top:131px;width:3.0px;height:1.1px;background:#b8b88e;"></div>
<div class="a" style="left:1457.0px;top:131px;width:3.2px;height:1.1px;background:#b8b88e;"></div>
<div class="a" style="left:1461.0px;top:131px;width:6.8px;height:1.1px;background:#b8b88e;"></div>
<div class="a" style="left:1442px;top:134.5px;width:2.5px;height:1.1px;background:#9a6a98;"></div>
<div class="a" style="left:1445px;top:134.5px;width:5.3px;height:1.1px;background:#4a7fb0;"></div>
<div class="a" style="left:1451.1px;top:134.5px;width:5.4px;height:1.1px;background:#4a7fb0;"></div>
<div class="a" style="left:1457.4px;top:134.5px;width:5.2px;height:1.1px;background:#4a7fb0;"></div>
<div class="a" style="left:1463.6px;top:134.5px;width:3.1px;height:1.1px;background:#4a7fb0;"></div>
<div class="a" style="left:1467.7px;top:134.5px;width:0.3px;height:1.1px;background:#4a7fb0;"></div>
<div class="a" style="left:1442px;top:136.5px;width:2.5px;height:1.1px;background:#9a6a98;"></div>
<div class="a" style="left:1445px;top:136.5px;width:2.9px;height:1.1px;background:#4a7fb0;"></div>
<div class="a" style="left:1448.7px;top:136.5px;width:5.9px;height:1.1px;background:#4a7fb0;"></div>
<div class="a" style="left:1455.8px;top:136.5px;width:3.7px;height:1.1px;background:#4a7fb0;"></div>
<div class="a" style="left:1460.7px;top:136.5px;width:3.2px;height:1.1px;background:#4a7fb0;"></div>
<div class="a" style="left:1464.7px;top:136.5px;width:3.3px;height:1.1px;background:#4a7fb0;"></div>
<div class="a" style="left:1442px;top:138.5px;width:4.1px;height:1.1px;background:#4a7fb0;"></div>
<div class="a" style="left:1447.3px;top:138.5px;width:0.7px;height:1.1px;background:#4a7fb0;"></div>
<div class="a" style="left:1449px;top:138.5px;width:5.9px;height:1.1px;background:#b8b88e;"></div>
<div class="a" style="left:1455.9px;top:138.5px;width:6.9px;height:1.1px;background:#b8b88e;"></div>
<div class="a" style="left:1463.6px;top:138.5px;width:4.4px;height:1.1px;background:#b8b88e;"></div>
<div class="a" style="left:1442px;top:140.5px;width:1px;height:1.1px;background:#9a9a9a;"></div>
<div class="a" style="left:1446px;top:142.5px;width:4.1px;height:1.1px;background:#3e9e8c;"></div>
<div class="a" style="left:1450.9px;top:142.5px;width:4.9px;height:1.1px;background:#3e9e8c;"></div>
<div class="a" style="left:1457.0px;top:142.5px;width:4.0px;height:1.1px;background:#3e9e8c;"></div>
<div class="a" style="left:1461.8px;top:142.5px;width:5.3px;height:1.1px;background:#3e9e8c;"></div>
<div class="a" style="left:1467.8px;top:142.5px;width:0.2px;height:1.1px;background:#3e9e8c;"></div>
<div class="a" style="left:1446px;top:144.5px;width:5.8px;height:1.1px;background:#3e9e8c;"></div>
<div class="a" style="left:1452.6px;top:144.5px;width:3.4px;height:1.1px;background:#3e9e8c;"></div>
<div class="a" style="left:1457.0px;top:144.5px;width:4.1px;height:1.1px;background:#3e9e8c;"></div>
<div class="a" style="left:1461.9px;top:144.5px;width:6.1px;height:1.1px;background:#3e9e8c;"></div>
<div class="a" style="left:1446px;top:146.5px;width:4.6px;height:1.1px;background:#b8b88e;"></div>
<div class="a" style="left:1451.4px;top:146.5px;width:5.6px;height:1.1px;background:#b8b88e;"></div>
<div class="a" style="left:1458.0px;top:146.5px;width:4.5px;height:1.1px;background:#b8b88e;"></div>
<div class="a" style="left:1463.8px;top:146.5px;width:4.2px;height:1.1px;background:#b8b88e;"></div>
<div class="a" style="left:1442px;top:148.5px;width:1px;height:1.1px;background:#9a9a9a;"></div>
<div class="a" style="left:1442px;top:150.5px;width:3.5px;height:1.1px;background:#9a6a98;"></div>
<div class="a" style="left:1447px;top:150.5px;width:4.0px;height:1.1px;background:#9a9a9a;"></div>
<div class="a" style="left:1452.0px;top:150.5px;width:5.3px;height:1.1px;background:#9a9a9a;"></div>
<div class="a" style="left:1458.5px;top:150.5px;width:6.3px;height:1.1px;background:#9a9a9a;"></div>
<div class="a" style="left:1465.8px;top:150.5px;width:2.2px;height:1.1px;background:#9a9a9a;"></div>
<div class="a" style="left:1442px;top:152.5px;width:4px;height:1.1px;background:#9a6a98;"></div>
<div class="a" style="left:1447px;top:152.5px;width:6.3px;height:1.1px;background:#9a9a9a;"></div>
<div class="a" style="left:1454.1px;top:152.5px;width:6.6px;height:1.1px;background:#9a9a9a;"></div>
<div class="a" style="left:1461.8px;top:152.5px;width:5.9px;height:1.1px;background:#9a9a9a;"></div>
<div class="a" style="left:1442px;top:156.5px;width:5px;height:1.1px;background:#4a7fb0;"></div>
<div class="a" style="left:1448px;top:156.5px;width:6.1px;height:1.1px;background:#b8b88e;"></div>
<div class="a" style="left:1455.1px;top:156.5px;width:2.9px;height:1.1px;background:#b8b88e;"></div>
<div class="a" style="left:1459.1px;top:156.5px;width:4.3px;height:1.1px;background:#b8b88e;"></div>
<div class="a" style="left:1464.4px;top:156.5px;width:3.6px;height:1.1px;background:#b8b88e;"></div>
<div class="a" style="left:1442px;top:158.5px;width:1px;height:1.1px;background:#9a9a9a;"></div>
<div class="a" style="left:1446px;top:160.5px;width:7.0px;height:1.1px;background:#3e9e8c;"></div>
<div class="a" style="left:1453.8px;top:160.5px;width:3.2px;height:1.1px;background:#3e9e8c;"></div>
<div class="a" style="left:1457.9px;top:160.5px;width:6.1px;height:1.1px;background:#3e9e8c;"></div>
<div class="a" style="left:1464.9px;top:160.5px;width:3.1px;height:1.1px;background:#3e9e8c;"></div>
<div class="a" style="left:1449px;top:162.5px;width:6.9px;height:1.1px;background:#9a9a9a;"></div>
<div class="a" style="left:1457.1px;top:162.5px;width:6.7px;height:1.1px;background:#9a9a9a;"></div>
<div class="a" style="left:1464.6px;top:162.5px;width:3.4px;height:1.1px;background:#9a9a9a;"></div>
<div class="a" style="left:1452px;top:164.5px;width:2.6px;height:1.1px;background:#9a9a9a;"></div>
<div class="a" style="left:1455.8px;top:164.5px;width:5.4px;height:1.1px;background:#9a9a9a;"></div>
<div class="a" style="left:1462.4px;top:164.5px;width:5.6px;height:1.1px;background:#9a9a9a;"></div>
<div class="a" style="left:1452px;top:166.5px;width:4.5px;height:1.1px;background:#9a9a9a;"></div>
<div class="a" style="left:1457.3px;top:166.5px;width:6.2px;height:1.1px;background:#9a9a9a;"></div>
<div class="a" style="left:1464.3px;top:166.5px;width:2.6px;height:1.1px;background:#9a9a9a;"></div>
<div class="a" style="left:1467.7px;top:166.5px;width:0.3px;height:1.1px;background:#9a9a9a;"></div>
<div class="a" style="left:1449px;top:168.5px;width:1px;height:1.1px;background:#9a9a9a;"></div>
<div class="a" style="left:1449px;top:170.5px;width:3.7px;height:1.1px;background:#5b7f4a;"></div>
<div class="a" style="left:1453.7px;top:170.5px;width:6.3px;height:1.1px;background:#5b7f4a;"></div>
<div class="a" style="left:1460.7px;top:170.5px;width:6.6px;height:1.1px;background:#5b7f4a;"></div>
<div class="a" style="left:1449px;top:172.5px;width:6.5px;height:1.1px;background:#9a9a9a;"></div>
<div class="a" style="left:1456.7px;top:172.5px;width:5.1px;height:1.1px;background:#9a9a9a;"></div>
<div class="a" style="left:1463.1px;top:172.5px;width:4.4px;height:1.1px;background:#9a9a9a;"></div>
<div class="a" style="left:1452px;top:174.5px;width:3.1px;height:1.1px;background:#9a9a9a;"></div>
<div class="a" style="left:1455.9px;top:174.5px;width:4.9px;height:1.1px;background:#9a9a9a;"></div>
<div class="a" style="left:1461.5px;top:174.5px;width:6.4px;height:1.1px;background:#9a9a9a;"></div>
<div class="a" style="left:1452px;top:176.5px;width:5.2px;height:1.1px;background:#9a9a9a;"></div>
<div class="a" style="left:1458.0px;top:176.5px;width:3.3px;height:1.1px;background:#9a9a9a;"></div>
<div class="a" style="left:1462.3px;top:176.5px;width:5.3px;height:1.1px;background:#9a9a9a;"></div>
<div class="a" style="left:1455px;top:178.5px;width:5.0px;height:1.1px;background:#9a9a9a;"></div>
<div class="a" style="left:1461.0px;top:178.5px;width:5.6px;height:1.1px;background:#9a9a9a;"></div>
<div class="a" style="left:1467.8px;top:178.5px;width:0.2px;height:1.1px;background:#9a9a9a;"></div>
<div class="a" style="left:1455px;top:180.5px;width:6.5px;height:1.1px;background:#9a9a9a;"></div>
<div class="a" style="left:1462.3px;top:180.5px;width:3.6px;height:1.1px;background:#9a9a9a;"></div>
<div class="a" style="left:1466.9px;top:180.5px;width:1.1px;height:1.1px;background:#9a9a9a;"></div>
<div class="a" style="left:1461px;top:182.5px;width:4.8px;height:1.1px;background:#9a9a9a;"></div>
<div class="a" style="left:1467.0px;top:182.5px;width:1.0px;height:1.1px;background:#9a9a9a;"></div>
<div class="a" style="left:1461px;top:184.5px;width:4.5px;height:1.1px;background:#9a9a9a;"></div>
<div class="a" style="left:1466.7px;top:184.5px;width:1.3px;height:1.1px;background:#9a9a9a;"></div>
<div class="a" style="left:1461px;top:186.5px;width:4.8px;height:1.1px;background:#9a9a9a;"></div>
<div class="a" style="left:1467.0px;top:186.5px;width:1.0px;height:1.1px;background:#9a9a9a;"></div>
<div class="a" style="left:1461px;top:188.5px;width:4.9px;height:1.1px;background:#9a9a9a;"></div>
<div class="a" style="left:1466.9px;top:188.5px;width:1.1px;height:1.1px;background:#9a9a9a;"></div>
<div class="a" style="left:1461px;top:190.5px;width:5.6px;height:1.1px;background:#9a9a9a;"></div>
<div class="a" style="left:1467.6px;top:190.5px;width:0.4px;height:1.1px;background:#9a9a9a;"></div>
<div class="a" style="left:1461px;top:192.5px;width:6.3px;height:1.1px;background:#9a9a9a;"></div>
<div class="a" style="left:1461px;top:194.5px;width:4.4px;height:1.1px;background:#9a9a9a;"></div>
<div class="a" style="left:1466.4px;top:194.5px;width:1.6px;height:1.1px;background:#9a9a9a;"></div>
<div class="a" style="left:1459px;top:196.5px;width:1px;height:1.1px;background:#9a9a9a;"></div>
<div class="a" style="left:1455px;top:198.5px;width:2.8px;height:1.1px;background:#9a9a9a;"></div>
<div class="a" style="left:1459.0px;top:198.5px;width:3.9px;height:1.1px;background:#9a9a9a;"></div>
<div class="a" style="left:1463.7px;top:198.5px;width:4.3px;height:1.1px;background:#9a9a9a;"></div>
<div class="a" style="left:1455px;top:200.5px;width:6.7px;height:1.1px;background:#9a9a9a;"></div>
<div class="a" style="left:1462.9px;top:200.5px;width:5.1px;height:1.1px;background:#9a9a9a;"></div>
<div class="a" style="left:1452px;top:202.5px;width:1px;height:1.1px;background:#b8b88e;"></div>
<div class="a" style="left:1449px;top:204.5px;width:1px;height:1.1px;background:#4a7fb0;"></div>
<div class="a" style="left:1449px;top:206.5px;width:5.9px;height:1.1px;background:#5b7f4a;"></div>
<div class="a" style="left:1455.7px;top:206.5px;width:4.3px;height:1.1px;background:#5b7f4a;"></div>
<div class="a" style="left:1461.0px;top:206.5px;width:3.2px;height:1.1px;background:#5b7f4a;"></div>
<div class="a" style="left:1465.4px;top:206.5px;width:2.6px;height:1.1px;background:#5b7f4a;"></div>
<div class="a" style="left:1449px;top:208.5px;width:5.7px;height:1.1px;background:#9a9a9a;"></div>
<div class="a" style="left:1455.9px;top:208.5px;width:4.3px;height:1.1px;background:#9a9a9a;"></div>
<div class="a" style="left:1461.2px;top:208.5px;width:3.4px;height:1.1px;background:#9a9a9a;"></div>
<div class="a" style="left:1465.6px;top:208.5px;width:2.4px;height:1.1px;background:#9a9a9a;"></div>
<div class="a" style="left:1452px;top:210.5px;width:2.6px;height:1.1px;background:#9a9a9a;"></div>
<div class="a" style="left:1455.8px;top:210.5px;width:4.6px;height:1.1px;background:#9a9a9a;"></div>
<div class="a" style="left:1461.6px;top:210.5px;width:2.6px;height:1.1px;background:#9a9a9a;"></div>
<div class="a" style="left:1465.1px;top:210.5px;width:2.9px;height:1.1px;background:#9a9a9a;"></div>
<div class="a" style="left:1452px;top:212.5px;width:4.8px;height:1.1px;background:#9a9a9a;"></div>
<div class="a" style="left:1457.6px;top:212.5px;width:3.0px;height:1.1px;background:#9a9a9a;"></div>
<div class="a" style="left:1461.4px;top:212.5px;width:6.6px;height:1.1px;background:#9a9a9a;"></div>
<div class="a" style="left:1452px;top:214.5px;width:2.9px;height:1.1px;background:#9a9a9a;"></div>
<div class="a" style="left:1455.9px;top:214.5px;width:2.7px;height:1.1px;background:#9a9a9a;"></div>
<div class="a" style="left:1459.4px;top:214.5px;width:3.7px;height:1.1px;background:#9a9a9a;"></div>
<div class="a" style="left:1463.9px;top:214.5px;width:4.1px;height:1.1px;background:#9a9a9a;"></div>
<div class="a" style="left:1449px;top:216.5px;width:1px;height:1.1px;background:#4a7fb0;"></div>
<div class="a" style="left:1445px;top:218.5px;width:2px;height:1.1px;background:#9a9a9a;"></div>
<div class="a" style="left:1445px;top:220.5px;width:6.6px;height:1.1px;background:#b8b88e;"></div>
<div class="a" style="left:1452.8px;top:220.5px;width:4.7px;height:1.1px;background:#b8b88e;"></div>
<div class="a" style="left:1458.6px;top:220.5px;width:2.9px;height:1.1px;background:#b8b88e;"></div>
<div class="a" style="left:1462.3px;top:220.5px;width:5.7px;height:1.1px;background:#b8b88e;"></div>
<div class="a" style="left:1442px;top:224.5px;width:2.5px;height:1.1px;background:#9a6a98;"></div>
<div class="a" style="left:1445px;top:224.5px;width:3.7px;height:1.1px;background:#4a7fb0;"></div>
<div class="a" style="left:1449.5px;top:224.5px;width:5.4px;height:1.1px;background:#4a7fb0;"></div>
<div class="a" style="left:1455.9px;top:224.5px;width:2.9px;height:1.1px;background:#4a7fb0;"></div>
<div class="a" style="left:1459.5px;top:224.5px;width:2.8px;height:1.1px;background:#4a7fb0;"></div>
<div class="a" style="left:1463.1px;top:224.5px;width:4.5px;height:1.1px;background:#4a7fb0;"></div>
<div class="a" style="left:1445px;top:226.5px;width:7.0px;height:1.1px;background:#7a7a6a;"></div>
<div class="a" style="left:1453.0px;top:226.5px;width:6.7px;height:1.1px;background:#7a7a6a;"></div>
<div class="a" style="left:1460.6px;top:226.5px;width:5.3px;height:1.1px;background:#7a7a6a;"></div>
<div class="a" style="left:1466.7px;top:226.5px;width:1.3px;height:1.1px;background:#7a7a6a;"></div>
<div class="a" style="left:1442px;top:228.5px;width:4px;height:1.1px;background:#9a6a98;"></div>
<div class="a" style="left:1447px;top:228.5px;width:3.7px;height:1.1px;background:#5b7f4a;"></div>
<div class="a" style="left:1451.5px;top:228.5px;width:3.4px;height:1.1px;background:#5b7f4a;"></div>
<div class="a" style="left:1455.9px;top:228.5px;width:5.3px;height:1.1px;background:#5b7f4a;"></div>
<div class="a" style="left:1462.4px;top:228.5px;width:5.6px;height:1.1px;background:#5b7f4a;"></div>
<div class="a" style="left:1445px;top:230.5px;width:4.5px;height:1.1px;background:#b8b88e;"></div>
<div class="a" style="left:1450.7px;top:230.5px;width:3.3px;height:1.1px;background:#b8b88e;"></div>
<div class="a" style="left:1455.0px;top:230.5px;width:6.1px;height:1.1px;background:#b8b88e;"></div>
<div class="a" style="left:1462.1px;top:230.5px;width:2.7px;height:1.1px;background:#b8b88e;"></div>
<div class="a" style="left:1465.6px;top:230.5px;width:2.4px;height:1.1px;background:#b8b88e;"></div>
<div class="a" style="left:1445px;top:232.5px;width:6.9px;height:1.1px;background:#b8b88e;"></div>
<div class="a" style="left:1453.1px;top:232.5px;width:4.6px;height:1.1px;background:#b8b88e;"></div>
<div class="a" style="left:1458.7px;top:232.5px;width:3.0px;height:1.1px;background:#b8b88e;"></div>
<div class="a" style="left:1462.9px;top:232.5px;width:4.4px;height:1.1px;background:#b8b88e;"></div>
<div class="a" style="left:1445px;top:236.5px;width:5.0px;height:1.1px;background:#5b7f4a;"></div>
<div class="a" style="left:1451.0px;top:236.5px;width:6.9px;height:1.1px;background:#5b7f4a;"></div>
<div class="a" style="left:1445px;top:238.5px;width:5.6px;height:1.1px;background:#b8b88e;"></div>
<div class="a" style="left:1451.4px;top:238.5px;width:4.0px;height:1.1px;background:#b8b88e;"></div>
<div class="a" style="left:1456.6px;top:238.5px;width:5.8px;height:1.1px;background:#b8b88e;"></div>
<div class="a" style="left:1463.2px;top:238.5px;width:4.3px;height:1.1px;background:#b8b88e;"></div>
<div class="a" style="left:1445px;top:240.5px;width:6.9px;height:1.1px;background:#4a7fb0;"></div>
<div class="a" style="left:1452.7px;top:240.5px;width:2.6px;height:1.1px;background:#4a7fb0;"></div>
<div class="a" style="left:1456.5px;top:240.5px;width:1.5px;height:1.1px;background:#4a7fb0;"></div>
<div class="a" style="left:1442px;top:242.5px;width:1px;height:1.1px;background:#9a9a9a;"></div>
<div class="a" style="left:1442px;top:246.5px;width:2.9px;height:1.1px;background:#4a7fb0;"></div>
<div class="a" style="left:1445.9px;top:246.5px;width:1.1px;height:1.1px;background:#4a7fb0;"></div>
<div class="a" style="left:1448px;top:246.5px;width:6.9px;height:1.1px;background:#b8b88e;"></div>
<div class="a" style="left:1456.1px;top:246.5px;width:3.6px;height:1.1px;background:#b8b88e;"></div>
<div class="a" style="left:1442px;top:248.5px;width:1px;height:1.1px;background:#b8b88e;"></div>
<div class="a" style="left:1446px;top:250.5px;width:3.2px;height:1.1px;background:#5b7f4a;"></div>
<div class="a" style="left:1450.2px;top:250.5px;width:2.5px;height:1.1px;background:#5b7f4a;"></div>
<div class="a" style="left:1453.7px;top:250.5px;width:6.8px;height:1.1px;background:#5b7f4a;"></div>
<div class="a" style="left:1461.8px;top:250.5px;width:0.2px;height:1.1px;background:#5b7f4a;"></div>
<div class="a" style="left:1446px;top:252.5px;width:6.8px;height:1.1px;background:#5b7f4a;"></div>
<div class="a" style="left:1453.8px;top:252.5px;width:3.5px;height:1.1px;background:#5b7f4a;"></div>
<div class="a" style="left:1458.1px;top:252.5px;width:1.9px;height:1.1px;background:#5b7f4a;"></div>
<div class="a" style="left:1446px;top:254.5px;width:2.9px;height:1.1px;background:#5b7f4a;"></div>
<div class="a" style="left:1449.9px;top:254.5px;width:4.8px;height:1.1px;background:#5b7f4a;"></div>
<div class="a" style="left:1455.4px;top:254.5px;width:3.6px;height:1.1px;background:#5b7f4a;"></div>
<div class="a" style="left:1459.9px;top:254.5px;width:2.1px;height:1.1px;background:#5b7f4a;"></div>
<div class="a" style="left:1446px;top:256.5px;width:3.1px;height:1.1px;background:#3e9e8c;"></div>
<div class="a" style="left:1450.3px;top:256.5px;width:2.7px;height:1.1px;background:#3e9e8c;"></div>
<div class="a" style="left:1453.8px;top:256.5px;width:3.8px;height:1.1px;background:#3e9e8c;"></div>
<div class="a" style="left:1458.9px;top:256.5px;width:3.5px;height:1.1px;background:#3e9e8c;"></div>
<div class="a" style="left:1463.6px;top:256.5px;width:4.4px;height:1.1px;background:#3e9e8c;"></div>
<div class="a" style="left:1449px;top:258.5px;width:5.5px;height:1.1px;background:#9a9a9a;"></div>
<div class="a" style="left:1455.7px;top:258.5px;width:4.3px;height:1.1px;background:#9a9a9a;"></div>
<div class="a" style="left:1446px;top:260.5px;width:1px;height:1.1px;background:#9a9a9a;"></div>
<div class="a" style="left:1445px;top:264.5px;width:5.7px;height:1.1px;background:#b8b88e;"></div>
<div class="a" style="left:1451.7px;top:264.5px;width:3.2px;height:1.1px;background:#b8b88e;"></div>
<div class="a" style="left:1456.1px;top:264.5px;width:5.3px;height:1.1px;background:#b8b88e;"></div>
<div class="a" style="left:1462.2px;top:264.5px;width:2.7px;height:1.1px;background:#b8b88e;"></div>
<div class="a" style="left:1466.1px;top:264.5px;width:1.9px;height:1.1px;background:#b8b88e;"></div>
<div class="a" style="left:1445px;top:266.5px;width:4.4px;height:1.1px;background:#b8b88e;"></div>
<div class="a" style="left:1450.6px;top:266.5px;width:6.2px;height:1.1px;background:#b8b88e;"></div>
<div class="a" style="left:1457.6px;top:266.5px;width:6.6px;height:1.1px;background:#b8b88e;"></div>
<div class="a" style="left:1465.4px;top:266.5px;width:2.6px;height:1.1px;background:#b8b88e;"></div>
<div class="a" style="left:1445px;top:268.5px;width:6.2px;height:1.1px;background:#b8b88e;"></div>
<div class="a" style="left:1452.4px;top:268.5px;width:6.1px;height:1.1px;background:#b8b88e;"></div>
<div class="a" style="left:1459.7px;top:268.5px;width:5.6px;height:1.1px;background:#b8b88e;"></div>
<div class="a" style="left:1466.5px;top:268.5px;width:1.5px;height:1.1px;background:#b8b88e;"></div>
<div class="a" style="left:1445px;top:270.5px;width:2.6px;height:1.1px;background:#b8b88e;"></div>
<div class="a" style="left:1448.4px;top:270.5px;width:5.4px;height:1.1px;background:#b8b88e;"></div>
<div class="a" style="left:1454.6px;top:270.5px;width:4.2px;height:1.1px;background:#b8b88e;"></div>
<div class="a" style="left:1459.8px;top:270.5px;width:5.0px;height:1.1px;background:#b8b88e;"></div>
<div class="a" style="left:1466.0px;top:270.5px;width:2.0px;height:1.1px;background:#b8b88e;"></div>
<div class="a" style="left:1442px;top:272.5px;width:1px;height:1.1px;background:#9a9a9a;"></div>
</div>
<div class="a" style="left:1442px;top:62.5px;width:1px;height:24px;background:#4a5a40;"></div>
<div class="a" style="left:1442px;top:89.8px;width:26px;height:4px;background:#e02020;"></div>
<div class="a" style="left:1460px;top:89.8px;width:8px;height:4px;background:#a02020;"></div>
<div class="a" style="left:1442px;top:96px;width:26px;height:11.5px;background:#e82020;"></div>
<div class="a" style="left:0px;top:826px;width:1468px;height:1px;background:#2b2b2b;"></div>
<div class="a" style="left:0px;top:827px;width:1468px;height:21px;background:#181818;"></div>
<div class="a" style="left:0px;top:847px;width:1468px;height:1px;background:#101010;"></div>
<div class="a" style="left:0px;top:848px;width:1468px;height:2px;background:#dde1ea;"></div>
<svg class="a" style="left:-10px;top:831px;" width="16" height="14" viewBox="0 0 16 14"><g fill="none" stroke="#cccccc" stroke-width="1.2"><rect x="0.6" y="0.8" width="12" height="9.8" rx="3"/><path d="M8.5 10.6 Q13 12.8 15 10.5 V6 Q15 3.5 12.6 3.2"/></g></svg>
<svg class="a" style="left:22.9px;top:831.3px;" width="15" height="12" viewBox="0 0 15 12"><path d="M1.2 0.2 L4.2 1.6 Q7.2 1.0 10.2 1.6 L13.3 0.2 Q13.9 2.5 13.8 4.2 Q14.6 5.5 14.4 7.2 Q14.0 12 7.2 12 Q0.4 12 0.0 7.2 Q-0.2 5.5 0.6 4.2 Q0.5 2.5 1.2 0.2 Z" fill="#cfcfcf"/><rect x="2.1" y="5.6" width="10" height="5" rx="2.5" fill="#141414"/><rect x="3.7" y="6.9" width="2.2" height="2.7" rx="1" fill="#cfcfcf"/><rect x="7.9" y="6.9" width="2.4" height="2.7" rx="1" fill="#cfcfcf"/></svg>
<div class="a t" style="left:41.40px;top:831.84px;font-size:12px;line-height:12px;color:#cccccc;letter-spacing:-0.625px;">ESP-IDF v5.4.0</div>
<svg class="a" style="left:133.5px;top:829.8px;" width="14" height="14" viewBox="0 0 14 14"><path d="M7 0.8 L8.8 5 L13.3 5.3 L9.9 8.2 L11 12.7 L7 10.3 L3 12.7 L4.1 8.2 L0.7 5.3 L5.2 5 Z" fill="none" stroke="#cccccc" stroke-width="1.1" stroke-linejoin="round"/></svg>
<svg class="a" style="left:168.5px;top:830px;" width="9" height="15" viewBox="0 0 9 15"><path d="M2.8 0.5 V3.8 M5.7 0.5 V3.8 M1 4 H7.5 V7.8 A3.25 3.4 0 0 1 1 7.8 Z M4.25 11.2 V14.5" fill="none" stroke="#cccccc" stroke-width="1.2"/></svg>
<div class="a t" style="left:183.80px;top:831.84px;font-size:12px;line-height:12px;color:#cccccc;letter-spacing:-0.524px;">COM6</div>
<svg class="a" style="left:233.7px;top:830px;" width="14" height="15" viewBox="0 0 14 15"><g fill="none" stroke="#cccccc" stroke-width="1.1"><rect x="2.5" y="3" width="9" height="9" rx="1"/><circle cx="7" cy="7.5" r="2"/><path d="M4.5 0.5 V3 M7 0.5 V3 M9.5 0.5 V3 M4.5 12 V14.5 M7 12 V14.5 M9.5 12 V14.5 M0 5 H2.5 M0 7.5 H2.5 M0 10 H2.5 M11.5 5 H14 M11.5 7.5 H14 M11.5 10 H14"/></g></svg>
<div class="a t" style="left:252.20px;top:831.84px;font-size:12px;line-height:12px;color:#cccccc;letter-spacing:-0.289px;">esp32h2</div>
<svg class="a" style="left:314.5px;top:831px;" width="13" height="13" viewBox="0 0 13 13"><g fill="none" stroke="#cccccc" stroke-width="1.1"><circle cx="6.5" cy="6.5" r="2"/><path d="M5.3 0.6 H7.7 L8.1 2.3 L9.6 3.1 L11.2 2.4 L12.4 4.5 L11.1 5.6 V7.4 L12.4 8.5 L11.2 10.6 L9.6 9.9 L8.1 10.7 L7.7 12.4 H5.3 L4.9 10.7 L3.4 9.9 L1.8 10.6 L0.6 8.5 L1.9 7.4 V5.6 L0.6 4.5 L1.8 2.4 L3.4 3.1 L4.9 2.3 Z"/></g></svg>
<svg class="a" style="left:346px;top:830.5px;" width="13" height="14" viewBox="0 0 13 14"><g fill="none" stroke="#cccccc" stroke-width="1.1"><path d="M0.5 2.5 H12.5 M4.5 2.5 V0.8 H8.5 V2.5 M2 2.5 L2.8 13.3 H10.2 L11 2.5 M5 5 V11 M8 5 V11"/></g></svg>
<svg class="a" style="left:378.5px;top:829.6px;" width="14" height="14" viewBox="0 0 14 14"><path transform="scale(1.03)" d="M12.8 3.5 A3.8 3.8 0 0 1 8 7.3 L2.5 12.8 A1.3 1.3 0 0 1 0.8 11 L6.3 5.5 A3.8 3.8 0 0 1 10.2 0.8 L8.3 2.8 L8.8 4.8 L10.8 5.3 Z" fill="none" stroke="#cccccc" stroke-width="1.1" stroke-linejoin="round"/></svg>
<svg class="a" style="left:410.5px;top:829.8px;" width="12" height="14" viewBox="0 0 12 14"><path d="M3.2 0.6 H9.2 L7.2 5 H11 L4 13.5 L5 7.8 H1.2 Z" fill="none" stroke="#cccccc" stroke-width="1.1" stroke-linejoin="round"/></svg>
<svg class="a" style="left:442px;top:831px;" width="14" height="12" viewBox="0 0 14 12"><g fill="none" stroke="#cccccc" stroke-width="1.1"><rect x="0.6" y="0.6" width="12.8" height="8.3" rx="0.8"/><path d="M7 9 V11.4 M3.5 11.5 H10.5"/></g></svg>
<svg class="a" style="left:472.3px;top:831.2px;" width="16" height="15" viewBox="0 0 16 15"><g fill="none" stroke="#cccccc" stroke-width="1.1"><path d="M3.2 6.5 V1.2 L14.8 6.2 L8.5 10"/><path d="M2.3 10.2 A2.2 2.2 0 0 1 6.7 10.2 V12.2 A2.2 2.2 0 0 1 2.3 12.2 Z"/><path d="M0.3 10.8 H2.3 M6.7 10.8 H8.7 M0.3 13.2 H2.3 M6.7 13.2 H8.7 M3 8.3 L2 7.3 M6 8.3 L7 7.3"/></g></svg>
<svg class="a" style="left:507.6px;top:829.6px;" width="13" height="15" viewBox="0 0 13 15"><path d="M6 0.6 C8.2 3 11.2 6 11.2 9.3 A5.2 4.9 0 0 1 0.8 9.3 C0.8 7.6 1.3 6.4 2.2 5.6 L3.6 7.2 C3.6 4.5 4.6 2.2 6 0.6 Z" fill="none" stroke="#cccccc" stroke-width="1.1" stroke-linejoin="round"/></svg>
<svg class="a" style="left:537.6px;top:830px;" width="15" height="14" viewBox="0 0 15 14"><g fill="none" stroke="#cccccc" stroke-width="1.1"><rect x="0.6" y="0.6" width="13.8" height="12.8" rx="1.2"/><path d="M2.3 4 L5.8 7 L2.3 10 M6.3 10.6 H12.3"/></g></svg>
<svg class="a" style="left:570px;top:830.5px;" width="14" height="13" viewBox="0 0 14 13"><g fill="none" stroke="#cccccc" stroke-width="1.1"><rect x="0.6" y="0.6" width="12.8" height="11.8" rx="1.2"/><path d="M3.5 6.5 H9.5 M7 4 L9.5 6.5 L7 9"/></g></svg>
<svg class="a" style="left:602.5px;top:830.5px;" width="13.5" height="13.5" viewBox="0 0 13.5 13.5"><g fill="none" stroke="#cccccc" stroke-width="1.1"><circle cx="6.75" cy="6.75" r="6"/><path d="M4.3 4.3 L9.2 9.2 M9.2 4.3 L4.3 9.2"/></g></svg>
<div class="a t" style="left:619.50px;top:831.84px;font-size:12px;line-height:12px;color:#cccccc;">9</div>
<svg class="a" style="left:631px;top:830.5px;" width="14" height="13" viewBox="0 0 14 13"><g fill="none" stroke="#cccccc" stroke-width="1.1"><path d="M7 0.8 L13.3 12.3 H0.7 Z" stroke-linejoin="round"/><path d="M7 4.5 V8.5 M7 9.8 V11"/></g></svg>
<div class="a t" style="left:648.50px;top:831.84px;font-size:12px;line-height:12px;color:#cccccc;">0</div>
<div class="a t" style="left:1125.90px;top:831.84px;font-size:12px;line-height:12px;color:#cccccc;letter-spacing:-0.596px;">[ESP-IDF: QEMU]</div>
<div class="a t" style="left:1230.20px;top:831.84px;font-size:12px;line-height:12px;color:#cccccc;letter-spacing:-0.418px;">[ESP-IDF: OpenOCD Server]</div>
<div class="a t" style="left:1391.50px;top:831.84px;font-size:12px;line-height:12px;color:#cccccc;letter-spacing:-0.317px;">Ln 28, Col 1</div>
<div class="a" style="left:312px;top:4px;width:123px;height:33px;border:2px solid #e85c5c"></div>
<div class="a" style="left:20px;top:825px;width:102px;height:23px;border:2px solid #e85c5c"></div>
<div class="a" style="left:163.5px;top:825.5px;width:59.5px;height:22.0px;border:2px solid #e85c5c"></div>
<div class="a" style="left:228.5px;top:825.5px;width:74.5px;height:22.0px;border:2px solid #e85c5c"></div>
<div class="a" style="left:375px;top:821.5px;width:23px;height:25.5px;border:3px solid #e8402a"></div>
<div class="a" style="left:405px;top:826px;width:23px;height:20px;border:2px solid #e06060"></div>
<div class="a" style="left:504.5px;top:821.5px;width:24.0px;height:31.5px;border:3px solid #e8301a"></div>
<svg class="a" style="left:88px;top:787px;" width="14" height="22" viewBox="0 0 14 22"><path d="M2.5 5.2 L10.2 1.8 V19.8" fill="none" stroke="#e84a4a" stroke-width="1.7" stroke-linejoin="miter"/></svg>
<div class="a t" style="left:192.80px;top:793.16px;font-size:25.8px;line-height:25.8px;color:#e84a4a;transform:scaleX(1.0);transform-origin:0 0;">2</div>
<div class="a t" style="left:276.80px;top:796.75px;font-size:25.1px;line-height:25.1px;color:#e84a4a;transform:scaleX(1.0);transform-origin:0 0;">3</div>
<div class="a t" style="left:386.74px;top:793.99px;font-size:26.0px;line-height:26.0px;color:#f05a5a;transform:scaleX(1.05);transform-origin:0 0;">4</div>
<div class="a t" style="left:426.17px;top:793.55px;font-size:31.6px;line-height:31.6px;color:#e02a2a;transform:scaleX(0.86);transform-origin:0 0;">5</div>
<div class="a t" style="left:531.50px;top:793.55px;font-size:31.6px;line-height:31.6px;color:#e81e1e;transform:scaleX(0.92);transform-origin:0 0;">6</div>
<svg class="a" style="left:0px;top:0px;pointer-events:none" width="1468" height="850" viewBox="0 0 1468 850"><path d="M211 128.5 L286 49.5 L281.5 45.8 L307.8 34 L297.4 59.8 L292.5 55.3 Z" fill="#f05555" stroke="#f05555" stroke-width="0.6" stroke-linejoin="round"/></svg>
</body></html>
